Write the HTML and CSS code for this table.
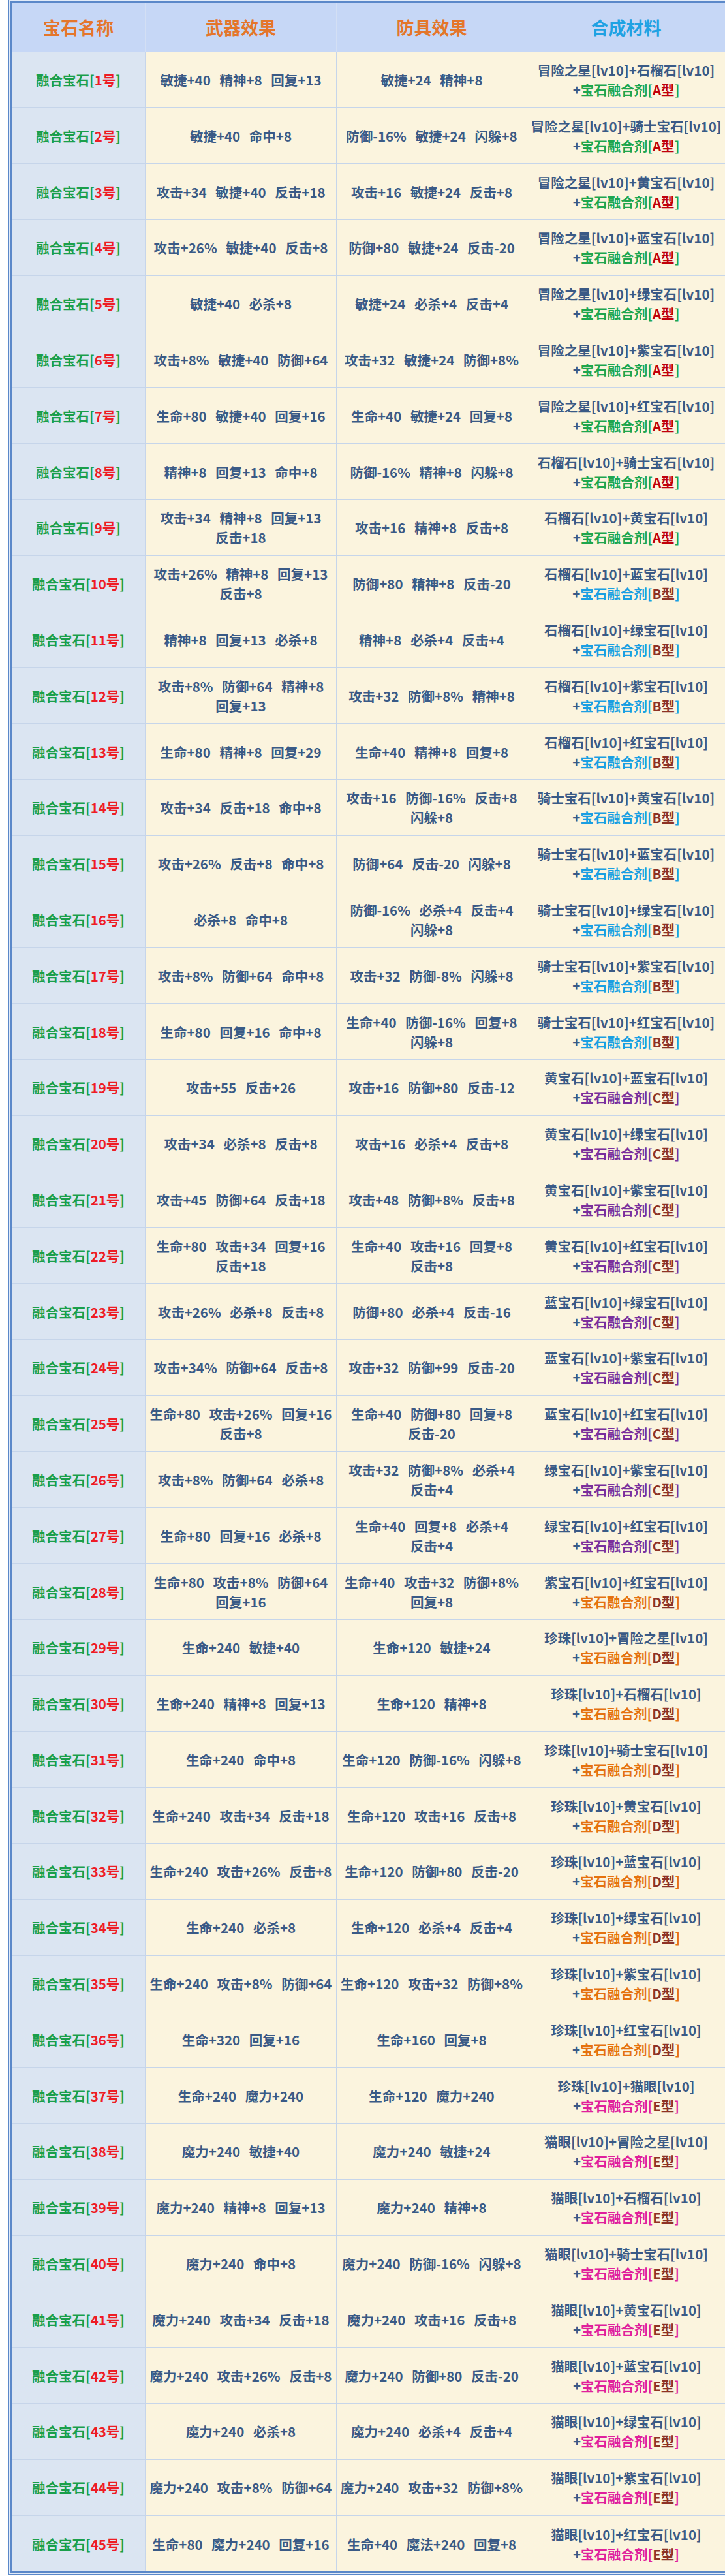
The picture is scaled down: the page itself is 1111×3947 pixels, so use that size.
FILE: index.html
```html
<!DOCTYPE html>
<html lang="zh-CN">
<head>
<meta charset="utf-8">
<title>融合宝石</title>
<link rel="stylesheet" href="styles.css">
</head>
<body>
<div class="frame">
<div class="inner">
<table class="gems">
<thead>
<tr>
<th class="c-name">宝石名称</th>
<th class="c-weapon">武器效果</th>
<th class="c-armor">防具效果</th>
<th class="c-mat">合成材料</th>
</tr>
</thead>
<tbody>
<tr><td class="name">融合宝石[<span class="no">1号</span>]</td><td>敏捷+40 精神+8 回复+13</td><td>敏捷+24 精神+8</td><td>冒险之星[lv10]+石榴石[lv10]<br>+<span class="agent ag-a">宝石融合剂[<span class="type">A型</span>]</span></td></tr>
<tr><td class="name">融合宝石[<span class="no">2号</span>]</td><td>敏捷+40 命中+8</td><td>防御-16% 敏捷+24 闪躲+8</td><td>冒险之星[lv10]+骑士宝石[lv10]<br>+<span class="agent ag-a">宝石融合剂[<span class="type">A型</span>]</span></td></tr>
<tr><td class="name">融合宝石[<span class="no">3号</span>]</td><td>攻击+34 敏捷+40 反击+18</td><td>攻击+16 敏捷+24 反击+8</td><td>冒险之星[lv10]+黄宝石[lv10]<br>+<span class="agent ag-a">宝石融合剂[<span class="type">A型</span>]</span></td></tr>
<tr><td class="name">融合宝石[<span class="no">4号</span>]</td><td>攻击+26% 敏捷+40 反击+8</td><td>防御+80 敏捷+24 反击-20</td><td>冒险之星[lv10]+蓝宝石[lv10]<br>+<span class="agent ag-a">宝石融合剂[<span class="type">A型</span>]</span></td></tr>
<tr><td class="name">融合宝石[<span class="no">5号</span>]</td><td>敏捷+40 必杀+8</td><td>敏捷+24 必杀+4 反击+4</td><td>冒险之星[lv10]+绿宝石[lv10]<br>+<span class="agent ag-a">宝石融合剂[<span class="type">A型</span>]</span></td></tr>
<tr><td class="name">融合宝石[<span class="no">6号</span>]</td><td>攻击+8% 敏捷+40 防御+64</td><td>攻击+32 敏捷+24 防御+8%</td><td>冒险之星[lv10]+紫宝石[lv10]<br>+<span class="agent ag-a">宝石融合剂[<span class="type">A型</span>]</span></td></tr>
<tr><td class="name">融合宝石[<span class="no">7号</span>]</td><td>生命+80 敏捷+40 回复+16</td><td>生命+40 敏捷+24 回复+8</td><td>冒险之星[lv10]+红宝石[lv10]<br>+<span class="agent ag-a">宝石融合剂[<span class="type">A型</span>]</span></td></tr>
<tr><td class="name">融合宝石[<span class="no">8号</span>]</td><td>精神+8 回复+13 命中+8</td><td>防御-16% 精神+8 闪躲+8</td><td>石榴石[lv10]+骑士宝石[lv10]<br>+<span class="agent ag-a">宝石融合剂[<span class="type">A型</span>]</span></td></tr>
<tr><td class="name">融合宝石[<span class="no">9号</span>]</td><td>攻击+34 精神+8 回复+13<br>反击+18</td><td>攻击+16 精神+8 反击+8</td><td>石榴石[lv10]+黄宝石[lv10]<br>+<span class="agent ag-a">宝石融合剂[<span class="type">A型</span>]</span></td></tr>
<tr><td class="name">融合宝石[<span class="no">10号</span>]</td><td>攻击+26% 精神+8 回复+13<br>反击+8</td><td>防御+80 精神+8 反击-20</td><td>石榴石[lv10]+蓝宝石[lv10]<br>+<span class="agent ag-b">宝石融合剂[<span class="type">B型</span>]</span></td></tr>
<tr><td class="name">融合宝石[<span class="no">11号</span>]</td><td>精神+8 回复+13 必杀+8</td><td>精神+8 必杀+4 反击+4</td><td>石榴石[lv10]+绿宝石[lv10]<br>+<span class="agent ag-b">宝石融合剂[<span class="type">B型</span>]</span></td></tr>
<tr><td class="name">融合宝石[<span class="no">12号</span>]</td><td>攻击+8% 防御+64 精神+8<br>回复+13</td><td>攻击+32 防御+8% 精神+8</td><td>石榴石[lv10]+紫宝石[lv10]<br>+<span class="agent ag-b">宝石融合剂[<span class="type">B型</span>]</span></td></tr>
<tr><td class="name">融合宝石[<span class="no">13号</span>]</td><td>生命+80 精神+8 回复+29</td><td>生命+40 精神+8 回复+8</td><td>石榴石[lv10]+红宝石[lv10]<br>+<span class="agent ag-b">宝石融合剂[<span class="type">B型</span>]</span></td></tr>
<tr><td class="name">融合宝石[<span class="no">14号</span>]</td><td>攻击+34 反击+18 命中+8</td><td>攻击+16 防御-16% 反击+8<br>闪躲+8</td><td>骑士宝石[lv10]+黄宝石[lv10]<br>+<span class="agent ag-b">宝石融合剂[<span class="type">B型</span>]</span></td></tr>
<tr><td class="name">融合宝石[<span class="no">15号</span>]</td><td>攻击+26% 反击+8 命中+8</td><td>防御+64 反击-20 闪躲+8</td><td>骑士宝石[lv10]+蓝宝石[lv10]<br>+<span class="agent ag-b">宝石融合剂[<span class="type">B型</span>]</span></td></tr>
<tr><td class="name">融合宝石[<span class="no">16号</span>]</td><td>必杀+8 命中+8</td><td>防御-16% 必杀+4 反击+4<br>闪躲+8</td><td>骑士宝石[lv10]+绿宝石[lv10]<br>+<span class="agent ag-b">宝石融合剂[<span class="type">B型</span>]</span></td></tr>
<tr><td class="name">融合宝石[<span class="no">17号</span>]</td><td>攻击+8% 防御+64 命中+8</td><td>攻击+32 防御-8% 闪躲+8</td><td>骑士宝石[lv10]+紫宝石[lv10]<br>+<span class="agent ag-b">宝石融合剂[<span class="type">B型</span>]</span></td></tr>
<tr><td class="name">融合宝石[<span class="no">18号</span>]</td><td>生命+80 回复+16 命中+8</td><td>生命+40 防御-16% 回复+8<br>闪躲+8</td><td>骑士宝石[lv10]+红宝石[lv10]<br>+<span class="agent ag-b">宝石融合剂[<span class="type">B型</span>]</span></td></tr>
<tr><td class="name">融合宝石[<span class="no">19号</span>]</td><td>攻击+55 反击+26</td><td>攻击+16 防御+80 反击-12</td><td>黄宝石[lv10]+蓝宝石[lv10]<br>+<span class="agent ag-c">宝石融合剂[<span class="type">C型</span>]</span></td></tr>
<tr><td class="name">融合宝石[<span class="no">20号</span>]</td><td>攻击+34 必杀+8 反击+8</td><td>攻击+16 必杀+4 反击+8</td><td>黄宝石[lv10]+绿宝石[lv10]<br>+<span class="agent ag-c">宝石融合剂[<span class="type">C型</span>]</span></td></tr>
<tr><td class="name">融合宝石[<span class="no">21号</span>]</td><td>攻击+45 防御+64 反击+18</td><td>攻击+48 防御+8% 反击+8</td><td>黄宝石[lv10]+紫宝石[lv10]<br>+<span class="agent ag-c">宝石融合剂[<span class="type">C型</span>]</span></td></tr>
<tr><td class="name">融合宝石[<span class="no">22号</span>]</td><td>生命+80 攻击+34 回复+16<br>反击+18</td><td>生命+40 攻击+16 回复+8<br>反击+8</td><td>黄宝石[lv10]+红宝石[lv10]<br>+<span class="agent ag-c">宝石融合剂[<span class="type">C型</span>]</span></td></tr>
<tr><td class="name">融合宝石[<span class="no">23号</span>]</td><td>攻击+26% 必杀+8 反击+8</td><td>防御+80 必杀+4 反击-16</td><td>蓝宝石[lv10]+绿宝石[lv10]<br>+<span class="agent ag-c">宝石融合剂[<span class="type">C型</span>]</span></td></tr>
<tr><td class="name">融合宝石[<span class="no">24号</span>]</td><td>攻击+34% 防御+64 反击+8</td><td>攻击+32 防御+99 反击-20</td><td>蓝宝石[lv10]+紫宝石[lv10]<br>+<span class="agent ag-c">宝石融合剂[<span class="type">C型</span>]</span></td></tr>
<tr><td class="name">融合宝石[<span class="no">25号</span>]</td><td>生命+80 攻击+26% 回复+16<br>反击+8</td><td>生命+40 防御+80 回复+8<br>反击-20</td><td>蓝宝石[lv10]+红宝石[lv10]<br>+<span class="agent ag-c">宝石融合剂[<span class="type">C型</span>]</span></td></tr>
<tr><td class="name">融合宝石[<span class="no">26号</span>]</td><td>攻击+8% 防御+64 必杀+8</td><td>攻击+32 防御+8% 必杀+4<br>反击+4</td><td>绿宝石[lv10]+紫宝石[lv10]<br>+<span class="agent ag-c">宝石融合剂[<span class="type">C型</span>]</span></td></tr>
<tr><td class="name">融合宝石[<span class="no">27号</span>]</td><td>生命+80 回复+16 必杀+8</td><td>生命+40 回复+8 必杀+4<br>反击+4</td><td>绿宝石[lv10]+红宝石[lv10]<br>+<span class="agent ag-c">宝石融合剂[<span class="type">C型</span>]</span></td></tr>
<tr><td class="name">融合宝石[<span class="no">28号</span>]</td><td>生命+80 攻击+8% 防御+64<br>回复+16</td><td>生命+40 攻击+32 防御+8%<br>回复+8</td><td>紫宝石[lv10]+红宝石[lv10]<br>+<span class="agent ag-d">宝石融合剂[<span class="type">D型</span>]</span></td></tr>
<tr><td class="name">融合宝石[<span class="no">29号</span>]</td><td>生命+240 敏捷+40</td><td>生命+120 敏捷+24</td><td>珍珠[lv10]+冒险之星[lv10]<br>+<span class="agent ag-d">宝石融合剂[<span class="type">D型</span>]</span></td></tr>
<tr><td class="name">融合宝石[<span class="no">30号</span>]</td><td>生命+240 精神+8 回复+13</td><td>生命+120 精神+8</td><td>珍珠[lv10]+石榴石[lv10]<br>+<span class="agent ag-d">宝石融合剂[<span class="type">D型</span>]</span></td></tr>
<tr><td class="name">融合宝石[<span class="no">31号</span>]</td><td>生命+240 命中+8</td><td>生命+120 防御-16% 闪躲+8</td><td>珍珠[lv10]+骑士宝石[lv10]<br>+<span class="agent ag-d">宝石融合剂[<span class="type">D型</span>]</span></td></tr>
<tr><td class="name">融合宝石[<span class="no">32号</span>]</td><td>生命+240 攻击+34 反击+18</td><td>生命+120 攻击+16 反击+8</td><td>珍珠[lv10]+黄宝石[lv10]<br>+<span class="agent ag-d">宝石融合剂[<span class="type">D型</span>]</span></td></tr>
<tr><td class="name">融合宝石[<span class="no">33号</span>]</td><td>生命+240 攻击+26% 反击+8</td><td>生命+120 防御+80 反击-20</td><td>珍珠[lv10]+蓝宝石[lv10]<br>+<span class="agent ag-d">宝石融合剂[<span class="type">D型</span>]</span></td></tr>
<tr><td class="name">融合宝石[<span class="no">34号</span>]</td><td>生命+240 必杀+8</td><td>生命+120 必杀+4 反击+4</td><td>珍珠[lv10]+绿宝石[lv10]<br>+<span class="agent ag-d">宝石融合剂[<span class="type">D型</span>]</span></td></tr>
<tr><td class="name">融合宝石[<span class="no">35号</span>]</td><td>生命+240 攻击+8% 防御+64</td><td>生命+120 攻击+32 防御+8%</td><td>珍珠[lv10]+紫宝石[lv10]<br>+<span class="agent ag-d">宝石融合剂[<span class="type">D型</span>]</span></td></tr>
<tr><td class="name">融合宝石[<span class="no">36号</span>]</td><td>生命+320 回复+16</td><td>生命+160 回复+8</td><td>珍珠[lv10]+红宝石[lv10]<br>+<span class="agent ag-d">宝石融合剂[<span class="type">D型</span>]</span></td></tr>
<tr><td class="name">融合宝石[<span class="no">37号</span>]</td><td>生命+240 魔力+240</td><td>生命+120 魔力+240</td><td>珍珠[lv10]+猫眼[lv10]<br>+<span class="agent ag-e">宝石融合剂[<span class="type">E型</span>]</span></td></tr>
<tr><td class="name">融合宝石[<span class="no">38号</span>]</td><td>魔力+240 敏捷+40</td><td>魔力+240 敏捷+24</td><td>猫眼[lv10]+冒险之星[lv10]<br>+<span class="agent ag-e">宝石融合剂[<span class="type">E型</span>]</span></td></tr>
<tr><td class="name">融合宝石[<span class="no">39号</span>]</td><td>魔力+240 精神+8 回复+13</td><td>魔力+240 精神+8</td><td>猫眼[lv10]+石榴石[lv10]<br>+<span class="agent ag-e">宝石融合剂[<span class="type">E型</span>]</span></td></tr>
<tr><td class="name">融合宝石[<span class="no">40号</span>]</td><td>魔力+240 命中+8</td><td>魔力+240 防御-16% 闪躲+8</td><td>猫眼[lv10]+骑士宝石[lv10]<br>+<span class="agent ag-e">宝石融合剂[<span class="type">E型</span>]</span></td></tr>
<tr><td class="name">融合宝石[<span class="no">41号</span>]</td><td>魔力+240 攻击+34 反击+18</td><td>魔力+240 攻击+16 反击+8</td><td>猫眼[lv10]+黄宝石[lv10]<br>+<span class="agent ag-e">宝石融合剂[<span class="type">E型</span>]</span></td></tr>
<tr><td class="name">融合宝石[<span class="no">42号</span>]</td><td>魔力+240 攻击+26% 反击+8</td><td>魔力+240 防御+80 反击-20</td><td>猫眼[lv10]+蓝宝石[lv10]<br>+<span class="agent ag-e">宝石融合剂[<span class="type">E型</span>]</span></td></tr>
<tr><td class="name">融合宝石[<span class="no">43号</span>]</td><td>魔力+240 必杀+8</td><td>魔力+240 必杀+4 反击+4</td><td>猫眼[lv10]+绿宝石[lv10]<br>+<span class="agent ag-e">宝石融合剂[<span class="type">E型</span>]</span></td></tr>
<tr><td class="name">融合宝石[<span class="no">44号</span>]</td><td>魔力+240 攻击+8% 防御+64</td><td>魔力+240 攻击+32 防御+8%</td><td>猫眼[lv10]+紫宝石[lv10]<br>+<span class="agent ag-e">宝石融合剂[<span class="type">E型</span>]</span></td></tr>
<tr><td class="name">融合宝石[<span class="no">45号</span>]</td><td>生命+80 魔力+240 回复+16</td><td>生命+40 魔法+240 回复+8</td><td>猫眼[lv10]+红宝石[lv10]<br>+<span class="agent ag-e">宝石融合剂[<span class="type">E型</span>]</span></td></tr>
</tbody>
</table>
</div>
</div>
</body>
</html>
```
FILE: styles.css
```css
* { box-sizing: border-box; }

html, body {
  margin: 0;
  padding: 0;
  background: #ffffff;
}

body {
  font-family: "Noto Sans CJK SC", "Noto Sans", sans-serif;
  overflow-x: hidden;
}

.frame {
  margin: -3px 0 0 12px;
  border: 2px solid #5b88c9;
  border-right: 0;
  padding: 2px 0 2px 2px;
  background: #e2ebf8;
}

.inner {
  border: 2px solid #5b88c9;
  border-top-width: 3px;
  border-right: 0;
}

.gems {
  width: 100%;
  table-layout: fixed;
  border-collapse: separate;
  border-spacing: 0;
  font-weight: 700;
  font-size: 20.5px;
  line-height: 30px;
  color: #3a5a86;
  text-align: center;
}

.gems th {
  height: 75.6px;
  padding: 0;
  background: #c6d7f6;
  font-size: 27px;
  font-weight: 700;
  color: #e4762b;
  border-right: 1px solid #d3dff4;
}

.gems th.c-name { width: 205px; }
.gems th.c-weapon { width: 293px; }
.gems th.c-armor { width: 292px; }
.gems th.c-mat { color: #1fa2e3; border-right: 0; }

.gems td {
  height: 85.8px;
  padding: 0 2px;
  background: #fbf4de;
  border-right: 1px solid #c6d5ea;
  border-bottom: 1px solid #c6d5ea;
  white-space: nowrap;
  word-spacing: 9px;
  vertical-align: middle;
}

.gems td:last-child { border-right: 0; }
.gems tbody tr:last-child td { border-bottom: 0; }

.gems td.name {
  background: #dbe5f2;
  color: #1a9f4b;
}

.name .no { color: #ee1c25; }

.agent .type { color: #8d3225; }

.ag-a { color: #1ea64e; }
.ag-a .type { color: #c0000b; }
.ag-b { color: #1a9fe2; }
.ag-c { color: #7a2f9c; }
.ag-d { color: #e5720f; }
.ag-e { color: #e0209c; }
```
